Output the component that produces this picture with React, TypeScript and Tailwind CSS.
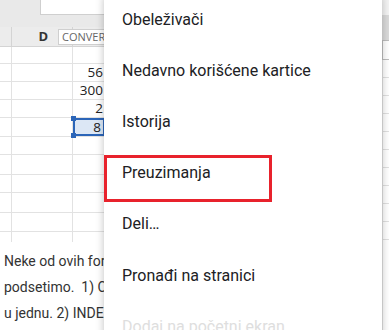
import React from 'react';

const rows = ['', '56', '300', '2', '8', '', '', '', '', ''];
const rowH = [17, 18, 18, 18, 19, 18, 20, 18, 20, 19];

const menuItems = [
    'Obeleživači',
    'Nedavno korišćene kartice',
    'Istorija',
    'Preuzimanja',
    'Deli…',
    'Pronađi na stranici',
];

const Sheet = () => (
    <div className="flex flex-col w-[382px]">
        {/* top bar */}
        <div className="h-[27px] bg-[#e9e9e9] flex">
            <div className="ml-[40px] w-[80px] h-[15px] bg-white border-b border-l border-[#cfcfcf]" />
        </div>
        {/* column header */}
        <div className="h-[20px] bg-[#ececec] flex border-b border-[#d4d4d4]">
            <div className="w-[12px] border-r border-[#d4d4d4]" />
            <div className="w-[61px] border-r border-[#d4d4d4] flex items-center justify-end pr-[24px] text-[13px] font-bold text-[#333] font-['Open_Sans',sans-serif]">D</div>
            <div className="flex-1 relative">
                <div className="absolute left-[-15px] top-[2px] h-[16px] w-[70px] bg-white border border-[#cfcfcf] text-[11px] leading-[14px] pl-[3px] text-[#666] font-['Open_Sans',sans-serif]">CONVERT</div>
            </div>
        </div>
        {/* grid rows */}
        {rows.map((v, i) => (
            <div key={i} style={{ height: rowH[i] }} className="flex border-b border-[#e2e2e2]">
                <div className="w-[12px] border-r border-[#e2e2e2]" />
                <div className="w-[61px] border-r border-[#e2e2e2]" />
                <div className={`w-[32px] flex items-center justify-end pr-[2px] text-[13.5px] text-[#222] font-['Open_Sans',sans-serif] ${i === 4 ? 'relative bg-[#dce7f5] border-2 border-[#2b65b8]' : ''}`}>
                    {v}
                    {i === 4 && (
                        <>
                            <span className="absolute left-[-4px] top-[-4px] w-[5px] h-[5px] bg-[#2b65b8]" />
                            <span className="absolute left-[-4px] bottom-[-4px] w-[5px] h-[5px] bg-[#2b65b8]" />
                        </>
                    )}
                </div>
            </div>
        ))}
        <div className="flex h-[10px]">
            <div className="w-[12px] border-r border-[#e2e2e2]" />
            <div className="w-[61px] border-r border-[#e2e2e2]" />
        </div>
        <div className="pt-[6px] pl-[4px] text-[14px] leading-[26px] text-[#333] font-['Roboto',sans-serif] whitespace-nowrap">
            <p>Neke od ovih formula</p>
            <p>podsetimo.&nbsp; 1) CONCAT</p>
            <p>u jednu. 2) INDEX</p>
        </div>
    </div>
);

const RightStrip = () => (
    <div className="flex flex-col w-[7px]">
        <div className="h-[15px] bg-[#f3f3f3]" />
        <div className="h-[25px] bg-[#dadada]" />
        <div className="h-[20px] bg-white border-l border-y border-[#bdbdbd]" />
        {Array.from({ length: 10 }).map((_, i) => (
            <div key={i} className="h-[18px] border-b border-l border-[#e0e0e0]" />
        ))}
        <div className="flex-1 border-l border-[#e0e0e0]" />
    </div>
);

export default function App() {
    return (
        <div className="relative w-[389px] h-[330px] overflow-hidden bg-white">
            <div className="flex h-full">
                <Sheet />
                <RightStrip />
            </div>

            {/* overflow menu */}
            <div className="absolute left-[104px] top-[-6px] w-[278px] h-[360px] bg-white shadow-[0_2px_8px_rgba(0,0,0,0.25)] font-['Roboto',sans-serif]">
                {menuItems.map(item => (
                    <div key={item} className="h-[51.2px] flex items-center pl-[18px] text-[16px] text-[#202124]">
                        {item}
                    </div>
                ))}
                <div className="h-[51.2px] flex items-center pl-[18px] text-[16px] text-[#dedede]">
                    Dodaj na početni ekran
                </div>
            </div>

            {/* highlight box */}
            <div className="absolute left-[104px] top-[155px] w-[168px] h-[47px] border-[3px] border-[#e8222c]" />
        </div>
    );
}
